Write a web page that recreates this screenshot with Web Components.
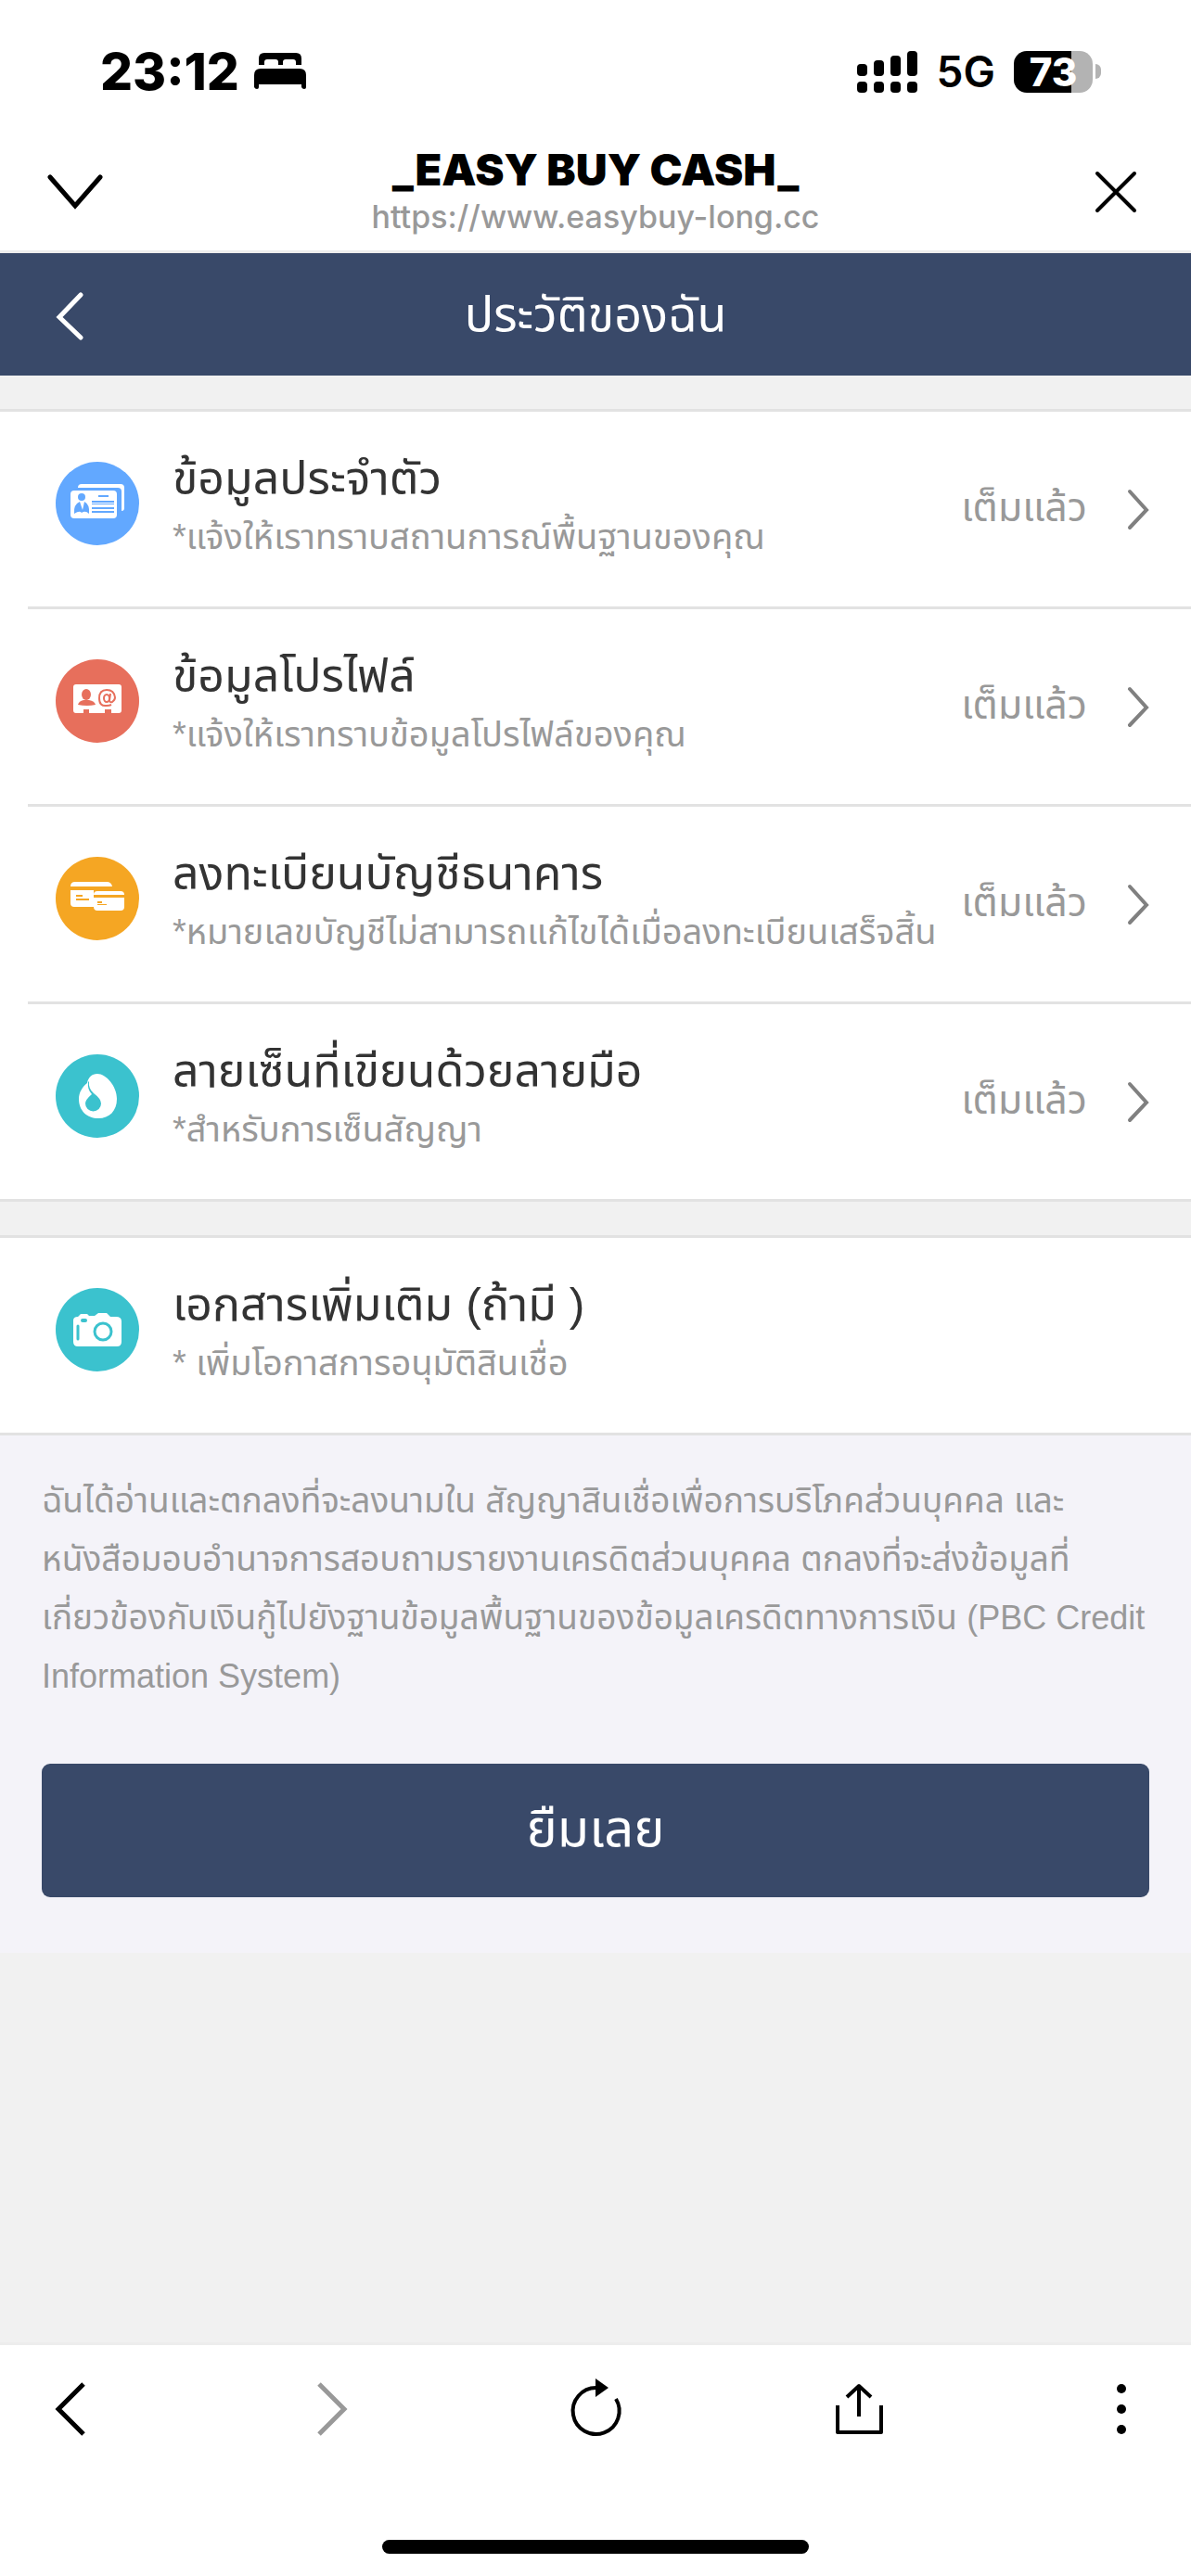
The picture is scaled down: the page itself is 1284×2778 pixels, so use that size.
<!DOCTYPE html>
<html lang="th">
<head>
<meta charset="utf-8">
<title>ประวัติของฉัน</title>
<style>
  body { margin: 0; background: #f1f1f1; }
</style>
</head>
<body>
<profile-app></profile-app>

<script>
// Circle icons used by the profile rows, keyed by name
const ROW_ICONS = {
  identity: `<circle cx="45" cy="45" r="45" fill="#62a8ff"/>
    <path d="M24 28q0-4 4-4H70q4 0 4 4V50q0 3-3 3V32q0-4-4-4z" fill="#fff"/>
    <rect x="16" y="31" width="50" height="30" rx="4" fill="#fff"/>
    <g fill="#62a8ff"><circle cx="28" cy="38" r="4"/><path d="M26 43q-7 3-6 13 6-4 8-1 4-3 8 1 1-10-5-13l-2 9z"/>
    <rect x="46" y="36" width="11" height="2"/><rect x="39" y="42" width="24" height="2"/><rect x="39" y="45" width="24" height="1"/><rect x="39" y="49" width="24" height="2"/><rect x="39" y="53" width="24" height="2"/></g>`,
  contact: `<circle cx="45" cy="45" r="45" fill="#e76f5c"/>
    <path d="M22 27H68q3 0 3 3V55q0 3-3 3H60V54H53v4H36V54H30v4H22q-3 0-3-3V30q0-3 3-3z" fill="#fff"/>
    <g fill="#e76f5c"><ellipse cx="33" cy="38" rx="5" ry="6"/><path d="M24 49q1-4 6-5h6q6 1 7 5-9 2-19 0z"/></g>
    <g fill="none" stroke="#e76f5c" stroke-width="2"><ellipse cx="55" cy="42" rx="3" ry="4"/><path d="M59 37l-1 7q0 3 3 2 3-2 3-5-1-8-9-8-8 0-8 9t8 8q3 0 5-1"/></g>`,
  bank: `<circle cx="45" cy="45" r="45" fill="#f5a623"/>
    <path d="M16 32q0-5 5-5H55q5 0 6 5zM16 36H41V54H20q-4 0-4-4z" fill="#fff"/>
    <path d="M41 41q0-4 4-4H70q4 0 4 4zM41 44H74V54q0 4-4 4H45q-4 0-4-4z" fill="#fff"/>
    <g fill="#f5a623"><rect x="22" y="41" width="7" height="2"/><rect x="22" y="45" width="14" height="2"/><rect x="45" y="48" width="5" height="2"/><rect x="45" y="51" width="10" height="1"/></g>`,
  drop: `<circle cx="45" cy="45" r="45" fill="#3bc2ce"/>
    <path d="M45 21C54 21 66 34 66 48c0 13-8 21-20 21S25 61 25 48c0-7 4-13 9-17 1-6 5-10 11-10z" fill="#fff"/>
    <path d="M35 30q-1 8 4 13-7 6-7 10a8 8 0 0 0 17 0q0-5-8-11-6-5-5-13z" fill="#3bc2ce"/>`,
  camera: `<circle cx="45" cy="45" r="45" fill="#3bc2ce"/>
    <path d="M19 35q0-4 5-4l3-3h7l2 2h6l4-3H55l4 4h6q6 0 6 5V58q0 5-5 5H24q-5 0-5-5z" fill="#fff"/>
    <g fill="none" stroke="#3bc2ce"><circle cx="51" cy="47" r="9" stroke-width="3"/><path d="M24 41V55" stroke-width="3" stroke-linecap="round"/></g><rect x="27" y="33" width="7" height="4" rx="2" fill="#3bc2ce"/>`,
};

class StatusBar extends HTMLElement {
  connectedCallback() {
    const root = this.attachShadow({ mode: 'open' });
    root.innerHTML = `
      <style>
        :host { display: flex; align-items: center; justify-content: space-between;
                height: 154px; padding: 0 97px 0 108px; box-sizing: border-box;
                background: #fff; color: #000; font-family: Inter, sans-serif; }
        .left, .right { display: flex; align-items: center; }
        .left { gap: 16px; font-size: 55px; font-weight: 800; }
        .right { gap: 20px; font-size: 46px; font-weight: 600; }
        svg { display: block; }
        .battery { display: flex; align-items: center; gap: 3px; }
        .cell { width: 85px; height: 45px; border-radius: 14px; color: #fff; font-size: 42px; font-weight: 800;
                line-height: 45px; text-align: center; background: linear-gradient(90deg, #000 73%, #b3b3b3 73%); }
        .tip { width: 6px; height: 16px; border-radius: 0 6px 6px 0; background: #b3b3b3; }
      </style>
      <div class="left">
        <span>23:12</span>
        <svg width="56" height="40" viewBox="0 0 56 40" aria-hidden="true">
          <path d="M5 13V6q0-6 6-6H45q6 0 6 6v7H45V10q0-3-3-3H34q-3 0-3 3v3H26V10q0-3-3-3H14q-3 0-3 3v3z"/>
          <path d="M0 24q0-7 7-7H49q7 0 7 7V37q0 2-2 2t-3-2V34H5v3q0 2-2 2t-3-2z"/>
        </svg>
      </div>
      <div class="right">
        <svg width="66" height="45" viewBox="0 0 66 45" aria-hidden="true">
          <rect x="0" y="14" width="11" height="13" rx="4"/><rect x="18" y="10" width="11" height="17" rx="4"/>
          <rect x="36" y="5" width="11" height="22" rx="4"/><rect x="54" y="0" width="11" height="27" rx="4"/>
          <rect x="0" y="33" width="11" height="12" rx="4"/><rect x="18" y="33" width="11" height="12" rx="4"/>
          <rect x="36" y="33" width="11" height="12" rx="4"/><rect x="54" y="33" width="11" height="12" rx="4"/>
        </svg>
        <span>5G</span>
        <div class="battery"><div class="cell">73</div><div class="tip"></div></div>
      </div>`;
  }
}
customElements.define('status-bar', StatusBar);

class BrowserHeader extends HTMLElement {
  connectedCallback() {
    const root = this.attachShadow({ mode: 'open' });
    root.innerHTML = `
      <style>
        :host { display: flex; align-items: center; justify-content: space-between;
                height: 119px; padding: 0 46px 10px; box-sizing: border-box; background: #fff;
                border-bottom: 3px solid #ededed; font-family: Inter, sans-serif; }
        .page { text-align: center; }
        .title { font-size: 47px; line-height: 54px; font-weight: 900; color: #000; }
        .url { font-size: 34px; line-height: 48px; font-weight: 500; color: #999; }
        button { border: 0; padding: 0; background: none; width: 70px; height: 70px;
                 display: flex; align-items: center; justify-content: center; }
      </style>
      <button aria-label="Minimize"><svg width="60" height="38" fill="none" stroke="#000" stroke-width="5" stroke-linecap="round"><path d="M3 3 30 34 57 3"/></svg></button>
      <div class="page">
        <div class="title"><slot></slot></div>
        <div class="url"><slot name="url"></slot></div>
      </div>
      <button aria-label="Close"><svg width="48" height="48" fill="none" stroke="#000" stroke-width="4" stroke-linecap="round"><path d="M4 4 44 44M44 4 4 44"/></svg></button>`;
  }
}
customElements.define('browser-header', BrowserHeader);

class PageBar extends HTMLElement {
  connectedCallback() {
    const root = this.attachShadow({ mode: 'open' });
    root.innerHTML = `
      <style>
        :host { display: grid; grid-template-columns: 90px 1fr 90px; align-items: center;
                height: 132px; background: #394969; color: #fff; }
        button { border: 0; padding: 0 0 0 60px; background: none; }
        svg { display: block; }
        h1 { margin: 0; font-size: 52px; line-height: 72px; font-weight: 400; text-align: center; }
      </style>
      <button aria-label="Back"><svg width="30" height="56" fill="none" stroke="#fff" stroke-width="5" stroke-linecap="round"><path d="M27 7 4 31 27 53"/></svg></button>
      <h1><slot></slot></h1>`;
  }
}
customElements.define('page-bar', PageBar);

// <info-group> stacks rows between two full-width rules
class InfoGroup extends HTMLElement {
  connectedCallback() {
    const root = this.attachShadow({ mode: 'open' });
    root.innerHTML = `
      <style>
        :host { display: block; margin-top: 36px; background: #fff;
                border-top: 3px solid #e2e2e2; border-bottom: 3px solid #e2e2e2; }
        ::slotted(:not(:first-child)) { border-top: 3px solid #e2e2e2; }
      </style>
      <slot></slot>`;
  }
}
customElements.define('info-group', InfoGroup);

class InfoRow extends HTMLElement {
  connectedCallback() {
    const status = this.getAttribute('status');
    const root = this.attachShadow({ mode: 'open' });
    root.innerHTML = `
      <style>
        :host { display: block; margin-left: 30px; }
        a { display: flex; align-items: flex-start; height: 210px; box-sizing: border-box;
            padding: 39px 45px 0 30px; color: #333; text-decoration: none; }
        svg { display: block; flex: none; }
        .icon { margin: 15px 36px 0 0; }
        .text { flex: 1; white-space: nowrap; }
        .title { font-size: 50px; line-height: 66px; }
        .note { font-size: 38px; line-height: 60px; color: #999; }
        .status { font-size: 43px; line-height: 60px; margin-top: 34px; color: #999; }
        .arrow { margin: 43px 0 0 42px; }
      </style>
      <a href="#${this.getAttribute('icon')}">
        <svg class="icon" width="90" height="90" viewBox="0 0 90 90" aria-hidden="true">${ROW_ICONS[this.getAttribute('icon')]}</svg>
        <div class="text">
          <div class="title"><slot></slot></div>
          <div class="note"><slot name="note"></slot></div>
        </div>
        ${status ? `<span class="status">${status}</span>
        <svg class="arrow" width="25" height="46" fill="none" stroke="#808080" stroke-width="4" stroke-linecap="round"><path d="M4 4 22 24 4 43"/></svg>` : ''}
      </a>`;
  }
}
customElements.define('info-row', InfoRow);

class LoanConsent extends HTMLElement {
  connectedCallback() {
    const root = this.attachShadow({ mode: 'open' });
    root.innerHTML = `
      <style>
        :host { display: block; padding: 39px 45px 60px; background: #f4f3f9; }
        p { margin: 0 0 63px; font-size: 37px; line-height: 63px; color: #999; }
        ::slotted([lang="en"]) { font-size: 36px; }
        button { display: block; width: 100%; height: 144px; border: 0; border-radius: 9px;
                 background: #394969; color: #fff; font: inherit; font-size: 56px; }
      </style>
      <p><slot></slot></p>
      <button><slot name="action"></slot></button>`;
  }
}
customElements.define('loan-consent', LoanConsent);

class BrowserToolbar extends HTMLElement {
  connectedCallback() {
    const root = this.attachShadow({ mode: 'open' });
    root.innerHTML = `
      <style>
        :host { display: block; background: #fff; border-top: 3px solid #ededed; }
        nav { display: flex; justify-content: space-between; padding: 34px 40px 0; }
        button { width: 70px; height: 70px; padding: 0; border: 0; background: none; }
        svg { display: block; }
        .home { width: 460px; height: 15px; margin: 106px auto 24px; border-radius: 8px; background: #000; }
      </style>
      <nav>
        <button aria-label="Back"><svg width="70" height="70" fill="none" stroke="#000" stroke-width="5"><path d="M50 8 23 35 50 62"/></svg></button>
        <button aria-label="Forward" disabled><svg width="70" height="70" fill="none" stroke="#999" stroke-width="5"><path d="M20 8 47 35 20 62"/></svg></button>
        <button aria-label="Reload"><svg width="70" height="70" fill="none" stroke="#000" stroke-width="4"><path d="M36 12A25 25 0 1 0 57 24"/><path d="M35 2 49 12 35 22z" fill="#000" stroke="none"/></svg></button>
        <button aria-label="Share"><svg width="70" height="70" fill="none" stroke="#000" stroke-width="4" stroke-linejoin="round"><path d="M12 31V60H59V31M35 43V10M22 22 35 10 48 22"/></svg></button>
        <button aria-label="More"><svg width="70" height="70"><circle cx="35" cy="13" r="5"/><circle cx="35" cy="35" r="5"/><circle cx="35" cy="57" r="5"/></svg></button>
      </nav>
      <div class="home"></div>`;
  }
}
customElements.define('browser-toolbar', BrowserToolbar);

class ProfileApp extends HTMLElement {
  connectedCallback() {
    const root = this.attachShadow({ mode: 'open' });
    root.innerHTML = `
      <style>
        :host { display: flex; flex-direction: column; min-height: 100vh;
                font-family: 'Liberation Sans', 'Noto Sans Thai', 'Noto Sans', sans-serif; }
        main { flex: 1; }
      </style>
      <status-bar></status-bar>
      <browser-header>_EASY BUY CASH_<span slot="url">https://www.easybuy-long.cc</span></browser-header>
      <main>
        <page-bar>ประวัติของฉัน</page-bar>
        <info-group>
          <info-row icon="identity" status="เต็มแล้ว">ข้อมูลประจำตัว<span slot="note">*แจ้งให้เราทราบสถานการณ์พื้นฐานของคุณ</span></info-row>
          <info-row icon="contact" status="เต็มแล้ว">ข้อมูลโปรไฟล์<span slot="note">*แจ้งให้เราทราบข้อมูลโปรไฟล์ของคุณ</span></info-row>
          <info-row icon="bank" status="เต็มแล้ว">ลงทะเบียนบัญชีธนาคาร<span slot="note">*หมายเลขบัญชีไม่สามารถแก้ไขได้เมื่อลงทะเบียนเสร็จสิ้น</span></info-row>
          <info-row icon="drop" status="เต็มแล้ว">ลายเซ็นที่เขียนด้วยลายมือ<span slot="note">*สำหรับการเซ็นสัญญา</span></info-row>
        </info-group>
        <info-group>
          <info-row icon="camera">เอกสารเพิ่มเติม (ถ้ามี )<span slot="note">* เพิ่มโอกาสการอนุมัติสินเชื่อ</span></info-row>
        </info-group>
        <loan-consent>ฉันได้อ่านและตกลงที่จะลงนามใน สัญญาสินเชื่อเพื่อการบริโภคส่วนบุคคล และหนังสือมอบอำนาจการสอบถามรายงานเครดิตส่วนบุคคล ตกลงที่จะส่งข้อมูลที่เกี่ยวข้องกับเงินกู้ไปยังฐานข้อมูลพื้นฐานของข้อมูลเครดิตทางการเงิน <span lang="en">(PBC Credit Information System)</span><span slot="action">ยืมเลย</span></loan-consent>
      </main>
      <browser-toolbar></browser-toolbar>`;
  }
}
customElements.define('profile-app', ProfileApp);
</script>
</body>
</html>
